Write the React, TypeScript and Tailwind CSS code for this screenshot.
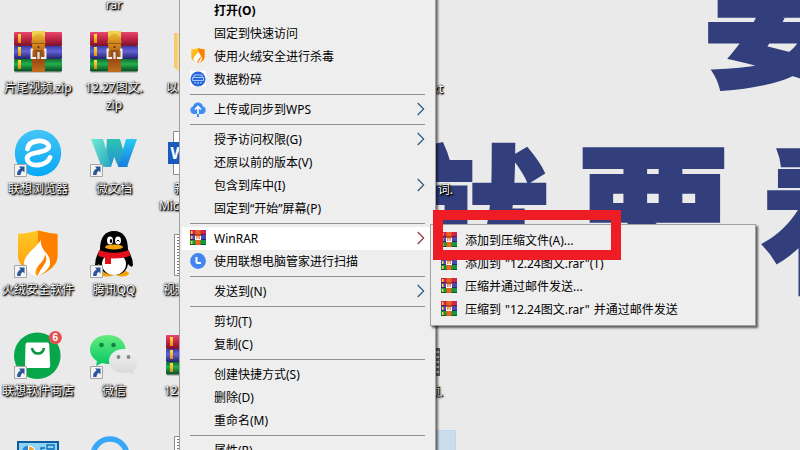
import { ReactNode } from "react";
import clsx from "clsx";

const labelStyle =
  "text-[12px] leading-[17px] text-white [text-shadow:0_0_1px_#000,1px_1px_1px_#000,1px_1px_2px_#000,0_1px_3px_rgba(0,0,0,0.7)]";

// ---------- icons ----------

function Books() {
  return (
    <svg width="48" height="48" viewBox="0 0 48 48">
      <defs>
        <linearGradient id="bookRed" x2="0" y2="1">
          <stop offset="0" stopColor="#e8486e" />
          <stop offset=".4" stopColor="#cb2a50" />
          <stop offset="1" stopColor="#7a1226" />
        </linearGradient>
        <linearGradient id="bookBlue" x2="0" y2="1">
          <stop offset="0" stopColor="#3c3ca8" />
          <stop offset=".4" stopColor="#6462d6" />
          <stop offset="1" stopColor="#24226c" />
        </linearGradient>
        <linearGradient id="bookGreen" x2="0" y2="1">
          <stop offset="0" stopColor="#0f6e30" />
          <stop offset=".4" stopColor="#24b04e" />
          <stop offset="1" stopColor="#08491e" />
        </linearGradient>
        <linearGradient id="strap" x2="0" y2="1">
          <stop offset="0" stopColor="#e9c53b" />
          <stop offset=".3" stopColor="#d88a1c" />
          <stop offset=".7" stopColor="#9a4a12" />
          <stop offset="1" stopColor="#c2701e" />
        </linearGradient>
        <linearGradient id="gold" x2="0" y2="1">
          <stop offset="0" stopColor="#ffe63a" />
          <stop offset="1" stopColor="#e08a10" />
        </linearGradient>
      </defs>
      <rect x="1" y="43" width="46" height="2" fill="#000" opacity=".18" />
      <rect y="4" width="48" height="14" rx="1" fill="url(#bookRed)" />
      <rect y="18" width="48" height="13" rx="1" fill="url(#bookBlue)" />
      <rect y="31" width="48" height="12.5" rx="1" fill="url(#bookGreen)" />
      <rect x="4" y="6" width="3" height="9" fill="url(#gold)" />
      <rect x="4" y="19" width="3" height="9" fill="url(#gold)" />
      <rect x="4" y="32" width="3" height="9" fill="url(#gold)" />
      <rect x="18" y="3" width="13" height="41" fill="url(#strap)" />
      <path d="M18 3h13v6l-2-1-2-2h-5l-2 2-2 1z" fill="#efd24a" />
      <path d="M17.500 12.500h14v3h-14z" fill="#d08a22" />
      <path d="M18 15.500h13" stroke="#8a4a10" strokeWidth=".8" />
      <circle cx="24.500" cy="19" r="1" fill="#5b2a08" />
      <path d="M20.500 22h8v6h-8z" fill="#96501a" />
      <path d="M19 21.500h-1.500V30H22M30 21.500h1.500V30H27" fill="none" stroke="#f2f2f2" strokeWidth="1.900" />
      <path d="M24.500 24v7" stroke="#dce2e8" strokeWidth="2.200" />
    </svg>
  );
}

function RarIcon() {
  return (
    <svg width="16" height="16" viewBox="0 0 16 16">
      <path d="M0 0h16v5H0z" fill="#cf2450" />
      <path d="M0 4h16v1H0z" fill="#7c1230" />
      <path d="M0 5h16v5H0z" fill="#4a48b4" />
      <path d="M0 9h16v1H0z" fill="#29276f" />
      <path d="M0 10h16v5H0z" fill="#16963c" />
      <path d="M0 14h16v1H0z" fill="#075c20" />
      <path d="M1 1h1.500v3H1zM1 6h1.500v3H1zM1 11h1.500v3H1z" fill="#ffd52e" />
      <path d="M5.500 0h5v15h-5z" fill="#e8641c" />
      <path d="M5.500 4h5v1.500h-5z" fill="#b5441a" />
      <path d="M5 6h1.300v3H7.400V6.500h1.200V9h1.100V6H11v4H5z" fill="#fff" />
    </svg>
  );
}

function Shield({ size }: { size: number }) {
  return (
    <svg width={size} height={size} viewBox="0 0 48 48">
      <defs>
        <linearGradient id="shieldL" x2="0" y2="1">
          <stop offset="0" stopColor="#ffc824" />
          <stop offset="1" stopColor="#ff9a10" />
        </linearGradient>
      </defs>
      <path d="M4 4q11-1 20-3.500Q33 3 43.500 4v22q0 12-19.500 20Q4 38 4 26z" fill="url(#shieldL)" />
      <path d="M24 .5Q33 3 43.500 4v22q0 12-19.500 20z" fill="#ff8000" />
      <path d="M27 7q0 5-7 11-10 9-10 15 0 8 13 14-4-6 2-12 6-6 6-11 3 6-1 11-4 5-7 12 9-5 12-10 3-7-2-13-8-8-6-17z" fill="#fff" />
    </svg>
  );
}

function ShredIcon() {
  return (
    <svg width="16" height="16" viewBox="0 0 16 16">
      <path d="M0 0h16v16H0z" fill="#fff" />
      <circle cx="8" cy="8" r="7.500" fill="#2a66d8" />
      <path d="M4 6V4h8v2M2.500 6.500h11v3h-11z" fill="none" stroke="#b9d4ff" strokeWidth=".9" />
      <path d="M4.500 11h1.200v1.500H4.500zM7.400 11h1.200v2H7.400zM10.300 11h1.200v1.500h-1.200z" fill="#b9d4ff" />
    </svg>
  );
}

function CloudIcon() {
  return (
    <svg width="16" height="16" viewBox="0 0 16 16">
      <path d="M4 13a4 4 0 0 1-.8-7.800 5 5 0 0 1 9.600 0A4 4 0 0 1 12 13z" fill="#3e8cf5" />
      <path d="M8 16V7" stroke="#3e8cf5" strokeWidth="2" />
      <path d="M8 13V6M5 8.500l3-3 3 3" fill="none" stroke="#fff" strokeWidth="1.600" />
    </svg>
  );
}

function ClockIcon() {
  return (
    <svg width="16" height="16" viewBox="0 0 16 16">
      <circle cx="8" cy="8" r="7.900" fill="#4285f0" />
      <path d="M6.500 4v5q0 1 1 1h3.500" fill="none" stroke="#fff" strokeWidth="2" />
    </svg>
  );
}

function BrowserIcon() {
  return (
    <svg width="48" height="48" viewBox="0 0 48 48">
      <defs>
        <linearGradient id="sky" x2="0" y2="1">
          <stop offset="0" stopColor="#43c4f6" />
          <stop offset="1" stopColor="#08a8f6" />
        </linearGradient>
      </defs>
      <circle cx="24" cy="24" r="23.200" fill="url(#sky)" />
      <path
        d="M13.500 20C15 10 32 10 34.500 16c1.500 5-5 6-11 7.500-9 1.500-11.500 4-10 8 3 7 19 6 22.500-3"
        fill="none"
        stroke="#fff"
        strokeWidth="4.800"
        strokeLinecap="round"
      />
    </svg>
  );
}

function DocsIcon() {
  return (
    <svg width="48" height="48" viewBox="0 0 48 48">
      <defs>
        <linearGradient id="mint" x2="1" y2="1">
          <stop offset="0" stopColor="#6cecd0" />
          <stop offset="1" stopColor="#2aa5c0" />
        </linearGradient>
        <linearGradient id="teal" x2="0" y2="1">
          <stop offset="0" stopColor="#2ac4b0" />
          <stop offset="1" stopColor="#2492d0" />
        </linearGradient>
        <linearGradient id="azure" x2="0" y2="1">
          <stop offset="0" stopColor="#28cdf0" />
          <stop offset="1" stopColor="#1878e0" />
        </linearGradient>
      </defs>
      <path d="M17 10h13l-9 28h-6z" fill="url(#teal)" />
      <path d="M1 10h12l8 28h-6q-4 0-5-4z" fill="url(#mint)" />
      <path d="M17 10h13l8 28h-6q-4 0-5-3z" fill="url(#teal)" />
      <path d="M36 10h11l-9 25q-1 3-4 3h-6z" fill="url(#azure)" />
    </svg>
  );
}

function QQIcon() {
  return (
    <svg width="48" height="48" viewBox="0 0 48 48">
      <ellipse cx="17" cy="43.500" rx="9" ry="3" fill="#f5a100" />
      <ellipse cx="32" cy="43.500" rx="7" ry="3" fill="#f5a100" />
      <path d="M10 20C10 7 15 1 24 1s14 6 14 19q5 8 5 15-1 4-5-1-2 11-14 11T9 34q-4 5-4 1 0-8 5-15z" fill="#000" />
      <ellipse cx="24" cy="34" rx="12" ry="11" fill="#fff" />
      <path d="M9 20q15 6 30 0l1 6q-16 5-32 0z" fill="#e3101c" />
      <path d="M15 25h6v9h-6z" fill="#e3101c" />
      <ellipse cx="20" cy="10.500" rx="3" ry="4" fill="#fff" />
      <ellipse cx="28" cy="10.500" rx="3" ry="4" fill="#fff" />
      <ellipse cx="21" cy="11" rx="1.200" ry="2" />
      <path d="M26.500 11.500q1.500-3 3 0" fill="none" stroke="#000" />
      <ellipse cx="24" cy="17" rx="9" ry="2.600" fill="#f7a30c" />
    </svg>
  );
}

function StoreIcon() {
  return (
    <svg width="58" height="48" viewBox="0 0 58 48" className="ml-2.5">
      <circle cx="23.300" cy="24.700" r="23.300" fill="#07a64a" />
      <path d="M13 11.500h20q2 0 2.200 2l1 21q0 2.500-2 2.500H13q-2 0-2-2l.5-21q0-2.500 1.500-2.500z" fill="#fff" />
      <path d="M18 17q1 5.500 6 5.500t6-5.500" fill="none" stroke="#07953f" strokeWidth="2.600" />
      <circle cx="41.300" cy="6.600" r="6.600" fill="#e15252" />
      <text x="41.300" y="10.200" textAnchor="middle" fontSize="10" fontWeight="700" fill="#fff" fontFamily="Liberation Sans, sans-serif">6</text>
    </svg>
  );
}

function WechatIcon() {
  return (
    <svg width="48" height="48" viewBox="0 0 48 48">
      <defs>
        <linearGradient id="wx" x2="0" y2="1">
          <stop offset="0" stopColor="#63ed7c" />
          <stop offset="1" stopColor="#05c665" />
        </linearGradient>
        <linearGradient id="wxGray" x2="0" y2="1">
          <stop offset="0" stopColor="#f0f0f0" />
          <stop offset="1" stopColor="#d9d9d9" />
        </linearGradient>
      </defs>
      <path d="M17.500 4C8 4 0 10 0 18.500c0 5 3 9 7 11.500l-1 5 6-3q3 1 6 1c10 0 17.500-6 17.500-14.500S28 4 17.500 4z" fill="url(#wx)" />
      <circle cx="11.500" cy="14" r="2.300" fill="#128044" />
      <circle cx="23.500" cy="14" r="2.300" fill="#128044" />
      <path d="M33.500 18C25.500 18 19 23 19 30s6 12 14 12q3 0 6-.8l5 2.300-1-4c3-2.500 5-5.500 5-9.500 0-7-6.500-12-14.500-12z" fill="url(#wxGray)" />
      <circle cx="28.500" cy="26" r="1.900" fill="#848484" />
      <circle cx="38.500" cy="26" r="1.900" fill="#848484" />
    </svg>
  );
}

function PanelIcon() {
  return (
    <svg width="48" height="48" viewBox="0 0 48 48">
      <path d="M3 9h42v32H3z" fill="#0b5da0" />
      <path d="M5 11h38v28H5z" fill="#8fd3f5" />
      <circle cx="15" cy="20" r="6.500" fill="#fff" />
      <path d="M15 20v-5.500A5.500 5.500 0 1 1 9.500 20z" fill="#f0a630" />
      <path d="M14 19v-5.500A5.500 5.500 0 0 0 8.500 19z" fill="#2a86d8" />
      <path d="M33 13h7v4h-7zM27 19v-3h4M24 20h16" fill="none" stroke="#0d6cb5" strokeWidth="1.300" />
    </svg>
  );
}

function RingIcon() {
  return (
    <svg width="48" height="48" viewBox="0 0 48 48">
      <circle cx="20" cy="24" r="17" fill="none" stroke="#37a8f7" strokeWidth="5.500" />
    </svg>
  );
}

function FolderIcon() {
  return (
    <svg width="48" height="48" viewBox="0 0 48 48">
      <path d="M8 5h32v38H12l-4-4z" fill="#fbdc8c" />
      <path d="M8 5h3v37l-3-3z" fill="#f2cc72" />
    </svg>
  );
}

function WordIcon() {
  return (
    <svg width="48" height="48" viewBox="0 0 48 48">
      <path d="M7.500 2.500h33v43h-33z" fill="#fff" stroke="#8b8b8b" />
      <path d="M2 13h22v22H2z" fill="#185abd" />
      <text x="4.500" y="30" fontSize="16" fontWeight="700" fill="#fff" fontFamily="Noto Sans, sans-serif">W</text>
    </svg>
  );
}

function NoteIcon() {
  return (
    <svg width="48" height="48" viewBox="0 0 48 48">
      <path d="M8.500 4.500h32v41h-32z" fill="#fff" stroke="#8b8b8b" />
      <path d="M12 7v37" stroke="#777" strokeWidth="2" strokeDasharray="1 2" />
    </svg>
  );
}

function Shortcut() {
  return (
    <svg width="13" height="13" viewBox="0 0 13 13" className="absolute left-3.5 top-[35px]">
      <path d="M.5.500h12v12H.500z" fill="#f4f4f4" stroke="#a5a5a5" />
      <path d="M5 2.500h5.500v6L8.700 6.800Q6.500 8 6.500 11H3.200Q2.500 6.500 6.600 4.400z" fill="#2a5699" />
    </svg>
  );
}

// ---------- desktop ----------

interface DesktopItem {
  icon: ReactNode;
  lines: string[];
  shortcut?: boolean;
  indent?: string;
}

const desktop: DesktopItem[] = [
  { icon: <Books />, lines: ["片尾视频.zip"] },
  { icon: <Books />, lines: ["12.27图文.", "zip"] },
  { icon: <FolderIcon />, lines: ["以"], indent: "pl-3.5" },
  { icon: <BrowserIcon />, lines: ["联想浏览器"], shortcut: true },
  { icon: <DocsIcon />, lines: ["微文档"], shortcut: true },
  { icon: <WordIcon />, lines: ["\u2003 新", "Micr"], indent: "pl-[7px]" },
  { icon: <Shield size={48} />, lines: ["火绒安全软件"], shortcut: true },
  { icon: <QQIcon />, lines: ["腾讯QQ"], shortcut: true },
  { icon: <NoteIcon />, lines: ["视频"], indent: "pl-[11px]" },
  { icon: <StoreIcon />, lines: ["联想软件商店"], shortcut: true },
  { icon: <WechatIcon />, lines: ["微信"], shortcut: true },
  { icon: <Books />, lines: ["12"], indent: "pl-3" },
  { icon: <PanelIcon />, lines: [] },
  { icon: <RingIcon />, lines: [] },
  { icon: <NoteIcon />, lines: [] },
];

function Desktop() {
  return (
    <div className="flex h-[450px] w-[456px] overflow-hidden">
      <div className="w-[228px] shrink-0">
        <div className={clsx("flex justify-center h-7", labelStyle)}>
          <span className="-mt-1">rar</span>
        </div>
        <div className="grid grid-cols-3 auto-rows-[101px]">
          {desktop.map((item, i) => (
            <div key={i} className="relative flex flex-col items-center gap-[3px]">
              {item.icon}
              {item.shortcut && <Shortcut />}
              <div className={clsx("w-full whitespace-nowrap", labelStyle, item.indent ?? "text-center")}>
                {item.lines.map((line) => (
                  <div key={line}>{line}</div>
                ))}
              </div>
            </div>
          ))}
        </div>
      </div>

      {/* column that peeks out to the right of the menu */}
      <div className={clsx("grid flex-1 grid-rows-[28px_101px_101px_101px_99px_101px] text-right", labelStyle)}>
        <div />
        <div className="pt-[52px] pr-[13px]">xt</div>
        <div className="pt-[52px] pr-[3px]">词.</div>
        <div />
        <div className="flex flex-col items-end gap-[7px] pt-[17px] pr-[13px]">
          <div className="w-2.5 h-7 mr-[3px] bg-[repeating-linear-gradient(#5e5e5e_0_3px,#ccc_3px_5px)] border-r border-[#5e5e5e]" />
          <span>频.</span>
        </div>
        <div className="w-10 justify-self-end bg-[#cbdded] border border-[#c0d8ee]" />
      </div>
    </div>
  );
}

function Wallpaper() {
  return (
    <div className="absolute inset-0 overflow-hidden font-black text-[#323f7c] text-[158px] leading-none whitespace-nowrap [-webkit-text-stroke:2px_#323f7c]">
      <div className="absolute left-[703px] top-[-66px]">要</div>
      <div className="absolute left-[392px] top-[139px] flex gap-[25px]">
        <span>就</span>
        <span>要</span>
        <span className="ml-0.5">看</span>
      </div>
    </div>
  );
}

// ---------- context menu ----------

interface MenuEntry {
  label: string;
  icon?: ReactNode;
  arrow?: boolean;
  bold?: boolean;
  active?: boolean;
}

const groups: MenuEntry[][] = [
  [
    { label: "打开(O)", bold: true },
    { label: "固定到快速访问" },
    { label: "使用火绒安全进行杀毒", icon: <Shield size={16} /> },
    { label: "数据粉碎", icon: <ShredIcon /> },
  ],
  [{ label: "上传或同步到WPS", icon: <CloudIcon />, arrow: true }],
  [
    { label: "授予访问权限(G)", arrow: true },
    { label: "还原以前的版本(V)" },
    { label: "包含到库中(I)", arrow: true },
    { label: "固定到“开始”屏幕(P)" },
  ],
  [
    { label: "WinRAR", icon: <RarIcon />, arrow: true, active: true },
    { label: "使用联想电脑管家进行扫描", icon: <ClockIcon /> },
  ],
  [{ label: "发送到(N)", arrow: true }],
  [{ label: "剪切(T)" }, { label: "复制(C)" }],
  [{ label: "创建快捷方式(S)" }, { label: "删除(D)" }, { label: "重命名(M)" }],
  [{ label: "属性(R)" }],
];

const archiveItems = [
  "添加到压缩文件(A)...",
  '添加到 "12.24图文.rar"(T)',
  "压缩并通过邮件发送...",
  '压缩到 "12.24图文.rar" 并通过邮件发送',
];

function MenuRow({ label, icon, arrow, bold, active }: MenuEntry) {
  return (
    <div className={clsx("flex items-center h-[23px] pl-2 pr-2", active && "bg-white")}>
      <span className="w-6 shrink-0 pb-0.5">{icon}</span>
      <span className={clsx("flex-1 whitespace-nowrap", bold && "font-bold")}>{label}</span>
      {arrow && (
        <svg width="8" height="14" viewBox="0 0 8 14" className="mb-0.5">
          <path d="M.7 1l6 6-6 6" fill="none" stroke={active ? "#8c3038" : "#24557c"} strokeWidth="1.100" />
        </svg>
      )}
    </div>
  );
}

function ContextMenu() {
  return (
    <div className="absolute left-[179px] top-[-4px] w-[257px] h-[470px] bg-[#eee] border border-[#a0a0a0] px-0.5 pt-0.5 shadow-[2px_1px_2px_rgba(0,0,0,0.55)] text-[12px] text-black">
      {groups.map((group, i) => (
        <div key={i}>
          {i > 0 && (
            <div className="h-[7px] pt-[3px] px-2">
              <div className="h-px bg-[#919191]" />
            </div>
          )}
          {group.map((entry) => (
            <MenuRow key={entry.label} {...entry} />
          ))}
        </div>
      ))}
    </div>
  );
}

function ArchiveMenu() {
  return (
    <div className="absolute left-[430px] top-[224px] w-[326px] h-[102px] bg-[#eee] border border-[#a0a0a0] px-0.5 pt-1 shadow-[2px_2px_2px_rgba(0,0,0,0.6)] text-[12px] text-black [word-spacing:1px]">
      {archiveItems.map((label) => (
        <MenuRow key={label} label={label} icon={<RarIcon />} />
      ))}
    </div>
  );
}

export default function App() {
  return (
    <div className="relative w-[800px] h-[450px] overflow-hidden bg-[#eaeaea] font-['Noto_Sans','Noto_Sans_CJK_SC',sans-serif]">
      <Wallpaper />
      <div className="relative">
        <Desktop />
      </div>
      <ContextMenu />
      <ArchiveMenu />
      <div className="absolute left-[433px] top-[210px] w-[188px] h-[50px] border-[10px] border-[#ee1c24]" />
    </div>
  );
}
